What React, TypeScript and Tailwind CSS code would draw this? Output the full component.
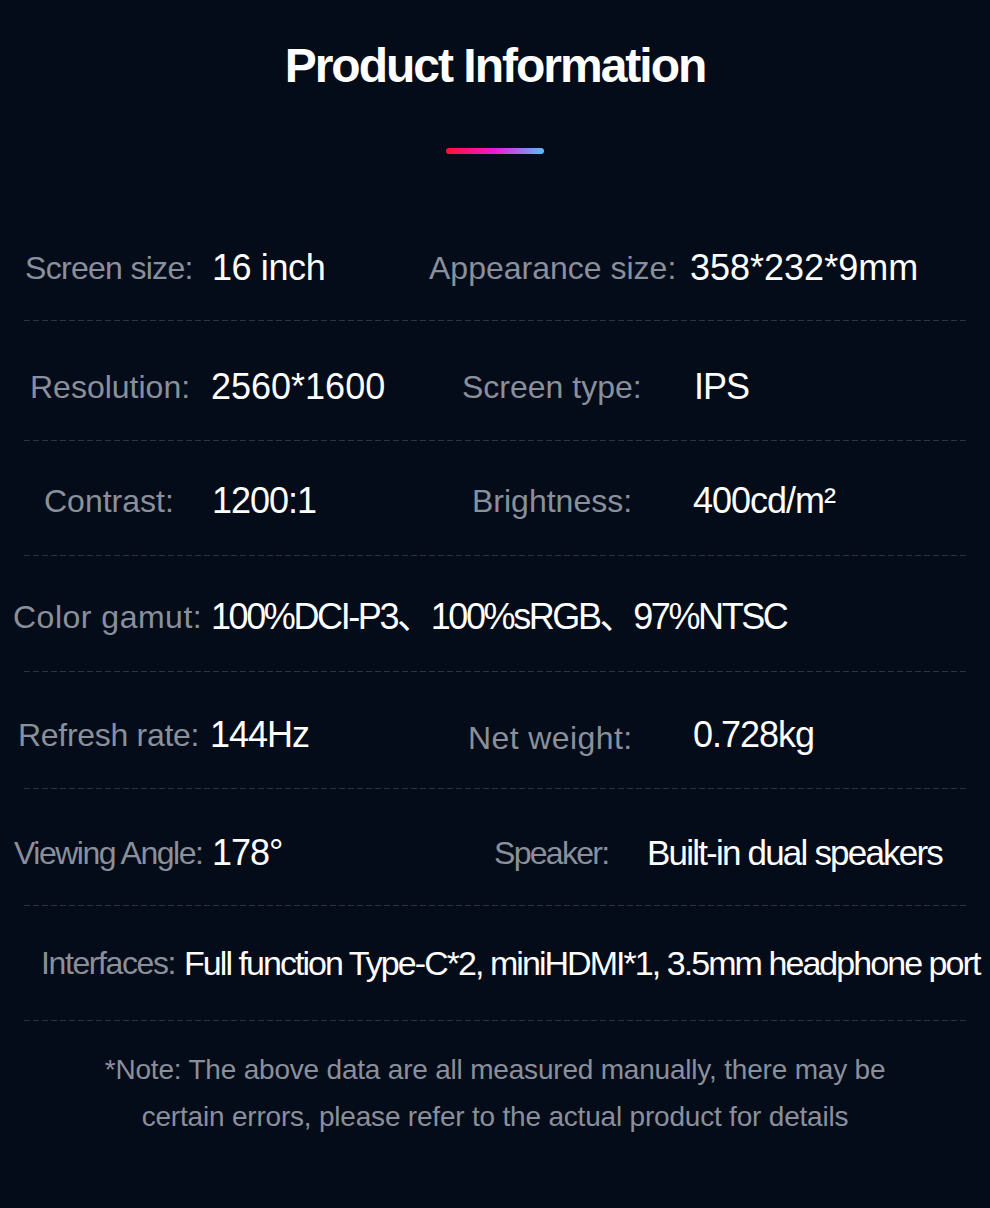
import React from "react";
import { twMerge } from "tailwind-merge";

type Cell = { x: number; text: React.ReactNode; kind: "l" | "v"; cls?: string };
type RowDef = { h: number; pt: number; cells: Cell[] };

const rows: RowDef[] = [
  {
    h: 116,
    pt: 12,
    cells: [
      { x: 25, text: "Screen size:", kind: "l", cls: "tracking-[-0.7px]" },
      { x: 212, text: "16 inch", kind: "v", cls: "tracking-[-0.4px]" },
      { x: 429, text: "Appearance size:", kind: "l" },
      { x: 690, text: "358*232*9mm", kind: "v", cls: "tracking-[0px]" },
    ],
  },
  {
    h: 119,
    pt: 13,
    cells: [
      { x: 30, text: "Resolution:", kind: "l" },
      { x: 211, text: "2560*1600", kind: "v", cls: "tracking-[0px]" },
      { x: 462, text: "Screen type:", kind: "l" },
      { x: 694, text: "IPS", kind: "v" },
    ],
  },
  {
    h: 114,
    pt: 6,
    cells: [
      { x: 44, text: "Contrast:", kind: "l" },
      { x: 212, text: "1200:1", kind: "v" },
      { x: 472, text: "Brightness:", kind: "l" },
      { x: 693, text: "400cd/m²", kind: "v" },
    ],
  },
  {
    h: 115,
    pt: 7,
    cells: [
      { x: 13, text: "Color gamut:", kind: "l", cls: "tracking-[0.5px]" },
      { x: 211, text: "100%DCI-P3、100%sRGB、97%NTSC", kind: "v", cls: "tracking-[-2.4px]" },
    ],
  },
  {
    h: 116,
    pt: 10,
    cells: [
      { x: 18, text: "Refresh rate:", kind: "l", cls: "tracking-[-0.3px]" },
      { x: 210, text: "144Hz", kind: "v" },
      { x: 468, text: "Net weight:", kind: "l", cls: "translate-y-[3px] tracking-[0.4px]" },
      { x: 693, text: "0.728kg", kind: "v" },
    ],
  },
  {
    h: 116,
    pt: 12,
    cells: [
      { x: 14, text: "Viewing Angle:", kind: "l", cls: "tracking-[-1.5px]" },
      { x: 212, text: "178°", kind: "v" },
      { x: 494, text: "Speaker:", kind: "l", cls: "tracking-[-1.7px]" },
      { x: 647, text: "Built-in dual speakers", kind: "v", cls: "tracking-[-1.8px] text-[35px]" },
    ],
  },
  {
    h: 114,
    pt: 0,
    cells: [
      { x: 41, text: "Interfaces:", kind: "l", cls: "tracking-[-1.4px]" },
      {
        x: 184,
        text: "Full function Type-C*2, miniHDMI*1, 3.5mm headphone port",
        kind: "v",
        cls: "tracking-[-1.95px] text-[34px]",
      },
    ],
  },
];

function Row({ def }: { def: RowDef }) {
  const widths = def.cells.map((c, i) =>
    i < def.cells.length - 1 ? def.cells[i + 1].x - c.x : 990 - c.x
  );
  return (
    <div className="flex flex-col">
      <div
        className="flex items-center"
        style={{ height: def.h, paddingTop: def.pt }}
      >
        <div className="shrink-0" style={{ width: def.cells[0].x }} />
        {def.cells.map((c, i) => (
          <div
            key={i}
            className={twMerge(
              "shrink-0 whitespace-nowrap leading-none",
              c.kind === "l"
                ? "text-[#8a909b] text-[32px] tracking-[0px]"
                : "text-white text-[36px] tracking-[-1px]",
              c.cls
            )}
            style={{ width: widths[i] }}
          >
            {c.text}
          </div>
        ))}
      </div>
      <div className="mx-[24px] h-px bg-[repeating-linear-gradient(90deg,#2b3240_0px,#2b3240_6px,transparent_6px,transparent_9px)]" />
    </div>
  );
}

export default function App() {
  return (
    <div
      className="w-[990px] h-[1208px] bg-[#040b19] overflow-hidden flex flex-col"
      style={{ fontFamily: '"Liberation Sans", "Noto Sans CJK SC", sans-serif' }}
    >
      <h1 className="mt-[38px] h-[56px] flex items-center justify-center text-white text-[48px] font-bold tracking-[-2px] leading-none">
        Product Information
      </h1>
      <div className="mt-[54px] flex justify-center">
        <div className="w-[98px] h-[6px] rounded-full bg-[linear-gradient(90deg,#ff1030_0%,#f018d8_50%,#58c0f8_100%)]" />
      </div>
      <div className="mt-[50px] flex flex-col">
        {rows.map((r, i) => (
          <Row key={i} def={r} />
        ))}
      </div>
      <div className="mt-[25px] flex flex-col items-center text-[#8a909b] text-[28px] leading-[47px] tracking-[-0.2px]">
        <p>*Note: The above data are all measured manually, there may be</p>
        <p>certain errors, please refer to the actual product for details</p>
      </div>
    </div>
  );
}
